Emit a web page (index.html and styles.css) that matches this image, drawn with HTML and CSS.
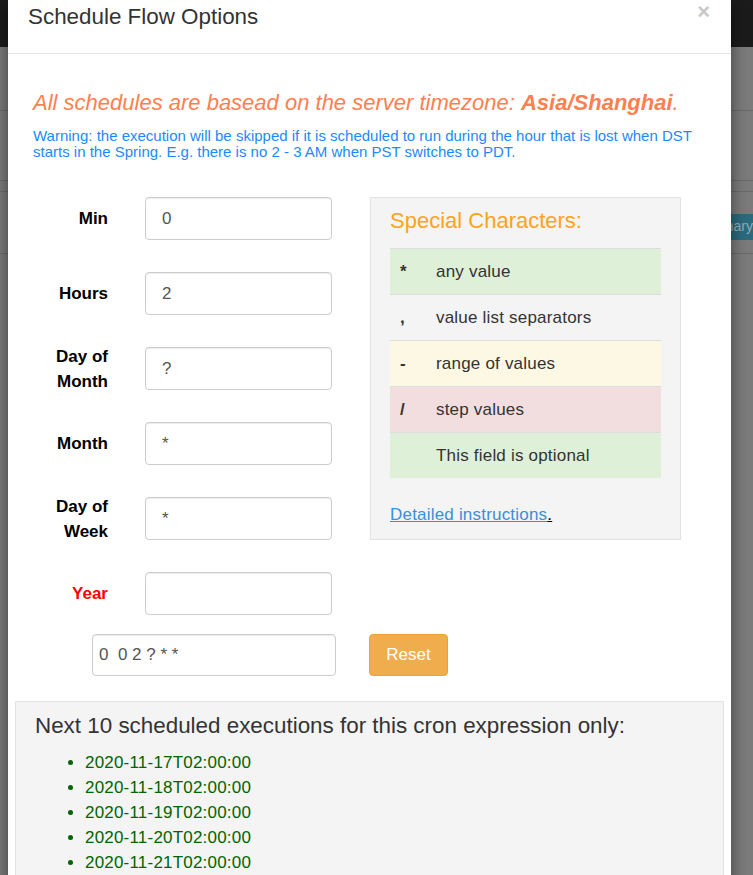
FILE: index.html
```html
<!DOCTYPE html>
<html>
<head>
<meta charset="utf-8">
<link rel="stylesheet" href="styles.css">
</head>
<body>
<div class="page">
  <div class="topbar"></div>
  <div class="gap1"></div>
  <div class="pline"></div>
  <div class="gap2"></div>
  <div class="pline"></div>
  <div class="gap3"></div>
  <div class="pline"></div>
  <div class="btnrow"><span class="summary">Summary</span></div>
  <div class="pline"></div>
</div>

<div class="modal">
  <div class="modal-header">
    <h4 class="title">Schedule Flow Options</h4>
    <span class="close">&times;</span>
  </div>
  <div class="modal-body">
    <p class="tz">All schedules are basead on the server timezone: <b>Asia/Shanghai</b>.</p>
    <p class="warn">Warning: the execution will be skipped if it is scheduled to run during the hour that is lost when DST starts in the Spring. E.g. there is no 2 - 3 AM when PST switches to PDT.</p>

    <div class="grid">
      <div class="fields">
        <div class="field"><label class="lbl">Min</label><input class="inp" type="text" value="0"></div>
        <div class="field"><label class="lbl">Hours</label><input class="inp" type="text" value="2"></div>
        <div class="field"><label class="lbl">Day of<br>Month</label><input class="inp" type="text" value="?"></div>
        <div class="field"><label class="lbl">Month</label><input class="inp" type="text" value="*"></div>
        <div class="field"><label class="lbl">Day of<br>Week</label><input class="inp" type="text" value="*"></div>
        <div class="field"><label class="lbl red">Year</label><input class="inp" type="text" value=""></div>
      </div>
      <div class="special">
        <h3 class="sp-title">Special Characters:</h3>
        <table class="sp-table">
          <tr class="ok"><td class="sym">*</td><td>any value</td></tr>
          <tr><td class="sym">,</td><td>value list separators</td></tr>
          <tr class="warnrow"><td class="sym">-</td><td>range of values</td></tr>
          <tr class="bad"><td class="sym">/</td><td>step values</td></tr>
          <tr class="ok"><td class="sym"></td><td>This field is optional</td></tr>
        </table>
        <p class="more"><a href="#" class="link">Detailed instructions</a><span class="dot">.</span></p>
      </div>
      <div class="cronwrap"><input class="cron" type="text" value="0  0 2 ? * *"></div>
      <div><button class="reset">Reset</button></div>
    </div>

    <div class="next">
      <h3 class="next-title">Next 10 scheduled executions for this cron expression only:</h3>
      <ul class="dates">
        <li>2020-11-17T02:00:00</li>
        <li>2020-11-18T02:00:00</li>
        <li>2020-11-19T02:00:00</li>
        <li>2020-11-20T02:00:00</li>
        <li>2020-11-21T02:00:00</li>
      </ul>
    </div>
  </div>
</div>
</body>
</html>
```

FILE: styles.css
```css
html, body {
  margin: 0;
  padding: 0;
  height: 100%;
  overflow: hidden;
}
body {
  background: #7b7b7b;
  font-family: "Liberation Sans", Arial, sans-serif;
  color: #333;
  position: relative;
}
.page {
  width: 100%;
}
.topbar {
  height: 47px;
  background: #1b1b1b;
}
.gap1 { height: 63px; }
.gap2 { height: 69px; }
.gap3 { height: 10px; }
.pline {
  height: 1px;
  background: #6a6a6a;
}
.btnrow {
  height: 61px;
  display: flex;
  align-items: flex-start;
  padding: 22px 0 0 687px;
  box-sizing: border-box;
}
.summary {
  background: #2c6a7d;
  color: #8fb0bb;
  font-size: 14px;
  padding: 0 10px 0 6px;
  height: 26px;
  line-height: 24px;
  white-space: nowrap;
}

.modal {
  position: absolute;
  top: 0;
  left: 8px;
  width: 723px;
  height: 900px;
  background: #fff;
  box-shadow: 0 5px 15px rgba(0,0,0,.5);
}
.modal-header {
  height: 53px;
  border-bottom: 1px solid #e5e5e5;
  display: flex;
  justify-content: space-between;
  align-items: flex-start;
  padding: 0 20px;
}
.title {
  margin: 0;
  font-size: 22.4px;
  font-weight: normal;
  line-height: 34px;
  color: #333;
}
.close {
  font-size: 22px;
  font-weight: bold;
  color: #c8c8c8;
  line-height: 22px;
  margin-top: 1px;
  margin-right: 1px;
}
.modal-body {
  padding: 0 7px;
}
.tz {
  margin: 36px 0 0 18px;
  font-size: 22px;
  line-height: 26px;
  font-style: italic;
  color: #ff7f50;
}
.warn {
  margin: 12px 0 0 18px;
  max-width: 670px;
  font-size: 15px;
  line-height: 16px;
  color: #1e88ff;
}
.grid {
  margin: 37px 0 0 18px;
  display: grid;
  grid-template-columns: 304px 311px;
  column-gap: 33px;
  row-gap: 19px;
  align-items: start;
}
.fields {
  display: flex;
  flex-direction: column;
  gap: 32px;
}
.field {
  height: 43px;
  display: flex;
  align-items: center;
  gap: 37px;
}
.lbl {
  width: 75px;
  flex: none;
  text-align: right;
  font-weight: bold;
  font-size: 17px;
  line-height: 25px;
  color: #000;
}
.lbl.red { color: #ff0000; }
.inp {
  width: 187px;
  height: 43px;
  box-sizing: border-box;
  border: 1px solid #ccc;
  border-radius: 4px;
  padding: 0 16px;
  font-family: "Liberation Sans", Arial, sans-serif;
  font-size: 17px;
  color: #555;
  box-shadow: inset 0 1px 1px rgba(0,0,0,.075);
}
.special {
  background: #f4f4f4;
  border: 1px solid #e3e3e3;
  padding: 10px 19px 13px;
}
.sp-title {
  margin: 0 0 14px;
  font-size: 22px;
  line-height: 26px;
  font-weight: normal;
  color: #ffa31a;
}
.sp-table {
  width: 100%;
  border-collapse: collapse;
  font-size: 17px;
  letter-spacing: 0.2px;
  color: #333;
}
.sp-table td {
  height: 45px;
  border-top: 1px solid #ddd;
  padding: 0;
  vertical-align: middle;
}
.sp-table td.sym {
  width: 36px;
  padding-left: 10px;
  font-weight: bold;
}
.sp-table tr.ok td { background: #dff0d8; }
.sp-table tr.warnrow td { background: #fcf8e3; }
.sp-table tr.bad td { background: #f2dede; }
.more {
  margin: 26px 0 0;
  font-size: 17px;
  letter-spacing: 0.2px;
  line-height: 22px;
}
.link {
  color: #3a8edb;
  text-decoration: underline;
}
.dot {
  color: #000;
  text-decoration: underline;
}
.cronwrap {
  padding-left: 59px;
}
.cron {
  width: 244px;
  height: 42px;
  box-sizing: border-box;
  border: 1px solid #ccc;
  border-radius: 4px;
  padding: 0 6px;
  font-family: "Liberation Sans", Arial, sans-serif;
  font-size: 17px;
  color: #555;
  box-shadow: inset 0 1px 1px rgba(0,0,0,.075);
}
.reset {
  margin-left: -1px;
  width: 79px;
  height: 42px;
  background: #f0ad4e;
  border: 1px solid #eea236;
  border-radius: 4px;
  color: #fff;
  font-family: "Liberation Sans", Arial, sans-serif;
  font-size: 17px;
}
.next {
  margin-top: 25px;
  background: #f4f4f4;
  border: 1px solid #e3e3e3;
  padding: 10px 19px;
}
.next-title {
  margin: 0 0 10px;
  font-size: 22.4px;
  line-height: 28px;
  font-weight: normal;
  color: #333;
}
.dates {
  margin: 0;
  padding-left: 50px;
  color: #006400;
  font-size: 17px;
  letter-spacing: 0.2px;
  line-height: 25px;
}
```
